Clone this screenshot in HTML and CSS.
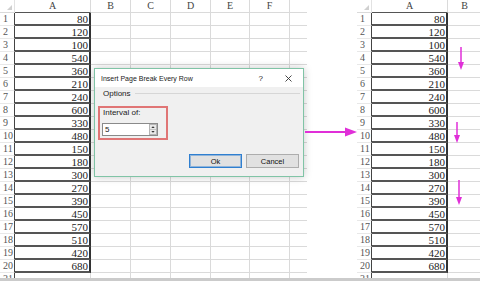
FILE: index.html
```html
<!DOCTYPE html>
<html>
<head>
    <title>Insert Page Break Every Row</title>
    <link rel="stylesheet" href="styles.css">
</head>
<body>

<div class="page">

    <!-- sheet before -->
    <div class="sheet sheet-left">
        <div class="hd corner"></div><div class="hd hd-a">A</div><div class="hd">B</div><div class="hd">C</div><div class="hd">D</div><div class="hd">E</div><div class="hd">F</div><div class="hd last"></div>
        <div class="rn">1</div><div class="v">80</div><div></div><div></div><div></div><div></div><div></div><div class="last"></div>
        <div class="rn">2</div><div class="v">120</div><div></div><div></div><div></div><div></div><div></div><div class="last"></div>
        <div class="rn">3</div><div class="v">100</div><div></div><div></div><div></div><div></div><div></div><div class="last"></div>
        <div class="rn">4</div><div class="v">540</div><div></div><div></div><div></div><div></div><div></div><div class="last"></div>
        <div class="rn">5</div><div class="v">360</div><div></div><div></div><div></div><div></div><div></div><div class="last"></div>
        <div class="rn">6</div><div class="v">210</div><div></div><div></div><div></div><div></div><div></div><div class="last"></div>
        <div class="rn">7</div><div class="v">240</div><div></div><div></div><div></div><div></div><div></div><div class="last"></div>
        <div class="rn">8</div><div class="v">600</div><div></div><div></div><div></div><div></div><div></div><div class="last"></div>
        <div class="rn">9</div><div class="v">330</div><div></div><div></div><div></div><div></div><div></div><div class="last"></div>
        <div class="rn">10</div><div class="v">480</div><div></div><div></div><div></div><div></div><div></div><div class="last"></div>
        <div class="rn">11</div><div class="v">150</div><div></div><div></div><div></div><div></div><div></div><div class="last"></div>
        <div class="rn">12</div><div class="v">180</div><div></div><div></div><div></div><div></div><div></div><div class="last"></div>
        <div class="rn">13</div><div class="v">300</div><div></div><div></div><div></div><div></div><div></div><div class="last"></div>
        <div class="rn">14</div><div class="v">270</div><div></div><div></div><div></div><div></div><div></div><div class="last"></div>
        <div class="rn">15</div><div class="v">390</div><div></div><div></div><div></div><div></div><div></div><div class="last"></div>
        <div class="rn">16</div><div class="v">450</div><div></div><div></div><div></div><div></div><div></div><div class="last"></div>
        <div class="rn">17</div><div class="v">570</div><div></div><div></div><div></div><div></div><div></div><div class="last"></div>
        <div class="rn">18</div><div class="v">510</div><div></div><div></div><div></div><div></div><div></div><div class="last"></div>
        <div class="rn">19</div><div class="v">420</div><div></div><div></div><div></div><div></div><div></div><div class="last"></div>
        <div class="rn">20</div><div class="v">680</div><div></div><div></div><div></div><div></div><div></div><div class="last"></div>
        <div class="rn">21</div><div></div><div></div><div></div><div></div><div></div><div></div><div class="last"></div>
    </div>

    <!-- sheet after -->
    <div class="sheet sheet-right">
        <div class="hd corner"></div><div class="hd hd-a">A</div><div class="hd last">B</div>
        <div class="rn">1</div><div class="v">80</div><div class="last"></div>
        <div class="rn">2</div><div class="v">120</div><div class="last"></div>
        <div class="rn">3</div><div class="v">100</div><div class="last"></div>
        <div class="rn">4</div><div class="v">540</div><div class="last"></div>
        <div class="rn">5</div><div class="v">360</div><div class="last"></div>
        <div class="rn">6</div><div class="v">210</div><div class="last"></div>
        <div class="rn">7</div><div class="v">240</div><div class="last"></div>
        <div class="rn">8</div><div class="v">600</div><div class="last"></div>
        <div class="rn">9</div><div class="v">330</div><div class="last"></div>
        <div class="rn">10</div><div class="v">480</div><div class="last"></div>
        <div class="rn">11</div><div class="v">150</div><div class="last"></div>
        <div class="rn">12</div><div class="v">180</div><div class="last"></div>
        <div class="rn">13</div><div class="v">300</div><div class="last"></div>
        <div class="rn">14</div><div class="v">270</div><div class="last"></div>
        <div class="rn">15</div><div class="v">390</div><div class="last"></div>
        <div class="rn">16</div><div class="v">450</div><div class="last"></div>
        <div class="rn">17</div><div class="v">570</div><div class="last"></div>
        <div class="rn">18</div><div class="v">510</div><div class="last"></div>
        <div class="rn">19</div><div class="v">420</div><div class="last"></div>
        <div class="rn">20</div><div class="v">680</div><div class="last"></div>
        <div class="rn">21</div><div></div><div class="last"></div>
    </div>

    <!-- dialog over the first sheet -->
    <div class="dialog">
        <div class="dlg-title">
            <span class="dlg-name">Insert Page Break Every Row</span>
            <span class="dlg-help">?</span>
            <svg class="dlg-close" width="7" height="7" viewBox="0 0 7 7">
                <path d="M0.5 0.5 L6.5 6.5 M6.5 0.5 L0.5 6.5" stroke="#333" stroke-width="0.9" fill="none"/>
            </svg>
        </div>
        <div class="dlg-body">
            <div class="legend-row"><span>Options</span></div>
            <div class="highlight">
                <div class="lbl">Interval of:</div>
                <div class="spin">
                    <span class="spin-val">5</span>
                    <svg class="spin-btn" width="8" height="11" viewBox="0 0 8 11">
                        <rect x="0.5" y="0.5" width="7" height="10" fill="#e8e8e8" stroke="#b4b4b4"/>
                        <line x1="1" y1="5.5" x2="7" y2="5.5" stroke="#c4c4c4"/>
                        <polygon points="2.3,4 5.7,4 4,2.2" fill="#333"/>
                        <polygon points="2.3,7 5.7,7 4,8.8" fill="#333"/>
                    </svg>
                </div>
            </div>
            <div class="buttons">
                <button class="btn btn-default">Ok</button>
                <button class="btn">Cancel</button>
            </div>
        </div>
    </div>

    <!-- magenta arrows -->
    <svg class="arrows" width="480" height="278" viewBox="0 0 480 278">
        <line x1="305" y1="132" x2="347" y2="132" stroke="#e02fd8" stroke-width="2"/>
        <polygon points="345,127.5 357,132 345,136.5" fill="#e02fd8"/>
        <line x1="461" y1="47" x2="461" y2="63" stroke="#e02fd8" stroke-width="1.5"/>
        <polygon points="458,62 464,62 461,70" fill="#e02fd8"/>
        <line x1="457" y1="122" x2="457" y2="136" stroke="#e02fd8" stroke-width="1.5"/>
        <polygon points="454,135 460,135 457,143" fill="#e02fd8"/>
        <line x1="459" y1="180" x2="459" y2="198" stroke="#e02fd8" stroke-width="1.5"/>
        <polygon points="456,197 462,197 459,205" fill="#e02fd8"/>
    </svg>
</div>
<div class="bar"></div>

</body>
</html>
```

FILE: styles.css
```css
* {
    box-sizing: border-box;
}
body {
    margin: 0;
    background-color: #fff;
    width: 480px;
    height: 281px;
    overflow: hidden;
    font-family: "Liberation Serif", "Times New Roman", serif;
}
.page {
    position: relative;
    display: flex;
    align-items: flex-start;
    height: 278px;
    overflow: hidden;
}
.bar {
    height: 3px;
    background-color: #cbcbcb;
}

/* spreadsheet grid */
.sheet {
    display: grid;
    grid-auto-rows: 13px;
    flex-shrink: 0;
}
.sheet-left {
    grid-template-columns: 15px 76px 40px 40px 40px 39px 40px 17px;
}
.sheet-right {
    grid-template-columns: 15px 76px 33px;
    margin-left: 50px;
}
.sheet > div {
    border-right: 1px solid #dadada;
    border-bottom: 1px solid #dadada;
    font-size: 11px;
    line-height: 12px;
    color: #222;
    white-space: nowrap;
    overflow: hidden;
}
.sheet > .hd {
    text-align: center;
    font-size: 10px;
    color: #444;
}
.sheet > .hd-a {
    border-bottom-color: #555;
}
.sheet > .corner {
    position: relative;
    border-right-color: #e2e2e2;
}
.corner::after {
    content: "";
    position: absolute;
    right: 2px;
    bottom: 2px;
    border-left: 5px solid transparent;
    border-bottom: 5px solid #d0d0d0;
}
.sheet > .rn {
    padding-left: 3px;
    font-size: 10px;
    color: #555;
    border-right-color: #444;
    border-bottom-color: #e8e8e8;
}
.sheet > .v {
    text-align: right;
    padding-right: 1px;
    border-right: 2px solid #333;
    border-bottom: 2px solid #555;
}
.sheet > .last {
    border-right: none;
}

/* dialog */
.dialog {
    position: absolute;
    left: 94px;
    top: 68px;
    width: 210px;
    border: 1px solid #80c4a6;
    background-color: #f0f0f0;
    box-shadow: 0 0 8px rgba(0, 0, 0, 0.22);
    font-family: "Liberation Sans", Arial, sans-serif;
    color: #1a1a1a;
}
.dlg-title {
    display: flex;
    align-items: center;
    height: 18px;
    padding: 0 11px 0 6px;
    background-color: #fff;
    font-size: 7px;
}
.dlg-name {
    flex: 1;
}
.dlg-help {
    font-size: 8px;
    margin-right: 22px;
}
.dlg-body {
    padding: 0 3px 8px 3px;
}
.legend-row {
    display: flex;
    align-items: center;
    height: 12px;
    padding-left: 5px;
    font-size: 8px;
}
.legend-row::after {
    content: "";
    flex: 1;
    height: 1px;
    margin-left: 4px;
    background-color: #d6d6d6;
}
.highlight {
    width: 70px;
    height: 34px;
    margin-top: 7px;
    padding-left: 2px;
    border: 2px solid #e07575;
}
.lbl {
    height: 10px;
    line-height: 10px;
    padding-left: 1px;
    font-size: 8px;
}
.spin {
    display: flex;
    align-items: center;
    width: 56px;
    height: 13px;
    margin-top: 5px;
    padding: 0 0 0 2px;
    border: 1px solid #8a8a8a;
    background-color: #fff;
    font-size: 8px;
}
.spin-val {
    flex: 1;
}
.buttons {
    display: flex;
    justify-content: flex-end;
    gap: 4px;
    margin-top: 14px;
    padding-right: 1px;
}
.btn {
    width: 53px;
    height: 14px;
    padding: 0;
    border: 1px solid #adadad;
    background-color: #e1e1e1;
    font-family: "Liberation Sans", Arial, sans-serif;
    font-size: 7.5px;
    color: #111;
}
.btn-default {
    border-color: #2f7fd0;
    box-shadow: inset 0 0 0 1px rgba(47, 127, 208, 0.45);
}

/* overlay arrows */
.arrows {
    position: absolute;
    left: 0;
    top: 0;
    pointer-events: none;
}
```
